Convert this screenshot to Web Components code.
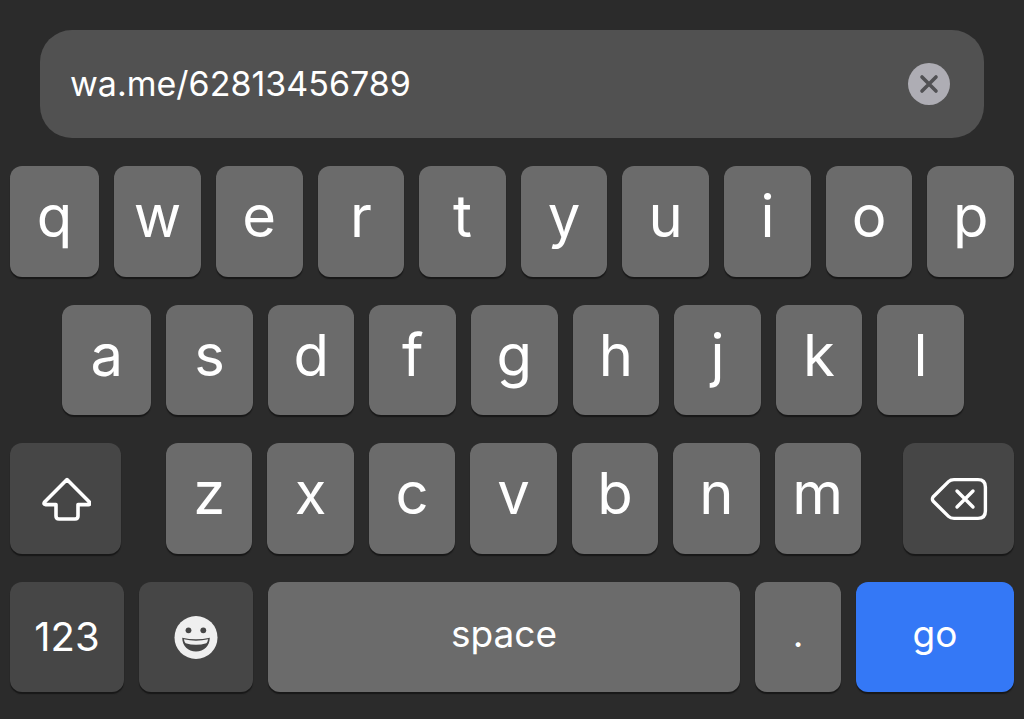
<!DOCTYPE html>
<html lang="en">
<head>
<meta charset="utf-8">
<meta name="viewport" content="width=device-width, initial-scale=1">
<title>Keyboard</title>
<style>
  html, body { margin: 0; }
  body { background: #2b2b2b; color: #fff; font-family: Inter, "Liberation Sans", sans-serif; }
</style>
</head>
<body>
<url-entry></url-entry>

<script>
const define = (name, html, setup) => {
  const template = document.createElement('template');
  template.innerHTML = html;
  customElements.define(name, class extends HTMLElement {
    constructor() {
      super();
      this.attachShadow({ mode: 'open' }).append(template.content.cloneNode(true));
    }
    connectedCallback() { if (setup) setup(this, this.shadowRoot); }
  });
};

/* One key. kind: letter (default), dark, word, go; label names icon keys. */
define('key-cap', `
  <style>
    :host { display: flex; min-width: 0; flex: 1 1 0; }
    button {
      flex: 1; min-width: 0; margin: 0; border: 0; padding: 0 0 10px;
      display: flex; align-items: center; justify-content: center;
      border-radius: 12px; background: #6b6b6b; color: #fff;
      box-shadow: 0 2px 1px #181818;
      font: 380 58px/64px Inter, "Liberation Sans", sans-serif;
    }
    :host([kind="word"]) button { font-weight: 400; font-size: 37px; padding-bottom: 6px; }
    :host([kind="dark"]) button { font-weight: 400; font-size: 40px; background: #464646; padding-bottom: 0; }
    :host([kind="dark"][label]) button { padding-top: 2px; }
    :host([kind="go"]) button { font-weight: 400; font-size: 37px; background: #3478f6; padding-bottom: 6px; }
    ::slotted(svg) { display: block; }
  </style>
  <button type="button"><slot></slot></button>`,
  (host, root) => {
    if (host.hasAttribute('label')) root.querySelector('button').setAttribute('aria-label', host.getAttribute('label'));
  });

/* A run of letter keys, built from the "keys" attribute. */
define('letter-row', `
  <style>
    :host { display: flex; gap: 15px; min-width: 0; }
    :host([edge]) key-cap:first-of-type { flex-grow: 1.03; }
  </style>`,
  (host, root) => {
    for (const ch of host.getAttribute('keys')) {
      const key = document.createElement('key-cap');
      key.textContent = ch;
      root.append(key);
    }
  });

define('address-field', `
  <style>
    :host {
      display: flex; align-items: center; box-sizing: border-box; height: 108px;
      padding: 0 34px 0 30px; border-radius: 32px; background: #515151;
    }
    input {
      flex: 1; min-width: 0; border: 0; padding: 0; background: none; color: #fff; outline: 0;
      font: 400 34px/44px Inter, "Liberation Sans", sans-serif;
    }
    button { border: 0; padding: 0; background: none; display: flex; }
  </style>
  <input type="text" aria-label="Address" value="wa.me/62813456789">
  <button type="button" aria-label="Clear text">
    <svg width="42" height="42" viewBox="0 0 42 42" fill="none">
      <circle cx="21" cy="21" r="21" fill="#aeadb4"/>
      <path d="M14 14l14 14M28 14L14 28" stroke="#515154" stroke-width="3.6" stroke-linecap="round"/>
    </svg>
  </button>`);

define('screen-keyboard', `
  <style>
    :host { display: grid; grid-template-rows: repeat(4, minmax(64px, 1fr)); gap: 28px; padding: 0 10px; }
    .home { padding: 0 5% 0 5.2%; }
    .lower { display: grid; grid-template-columns: 111fr 782fr 111fr; }
    .lower letter-row { margin: 0 42px 0 45px; }
    .bottom { display: grid; grid-template-columns: 114fr 114fr 472fr 86fr 158fr; gap: 15px; }
  </style>
  <letter-row edge keys="qwertyuiop"></letter-row>
  <letter-row edge class="home" keys="asdfghjkl"></letter-row>
  <div class="lower">
    <key-cap kind="dark" label="Shift">
      <svg width="50" height="44" viewBox="0 0 50 44" fill="none" stroke="#fff" stroke-width="3.6" stroke-linejoin="round">
        <path d="M26 2.600L3.600 25Q2 27.600 4.600 27.600H15V39Q15 42 18 42H34Q37 42 37 39V27.600H47.400Q50 27.600 48.400 25Z"/>
      </svg>
    </key-cap>
    <letter-row keys="zxcvbnm"></letter-row>
    <key-cap kind="dark" label="Delete">
      <svg width="58" height="44" viewBox="0 0 58 44" fill="none" stroke="#fff" stroke-width="3.4" stroke-linejoin="round" stroke-linecap="round">
        <path d="M24 2.600H48Q55.400 2.600 55.400 10V34Q55.400 41.400 48 41.400H24Q20.500 41.400 18.500 39.400L3 24Q1.800 22 3 20L18.500 4.600Q20.500 2.600 24 2.600Z"/>
        <path d="M27 14l16 16M43 14L27 30"/>
      </svg>
    </key-cap>
  </div>
  <div class="bottom">
    <key-cap kind="dark">123</key-cap>
    <key-cap kind="dark" label="Emoji">
      <svg width="44" height="44" viewBox="0 0 44 44">
        <circle cx="22" cy="21.500" r="21.500" fill="#efefef"/>
        <circle cx="14.500" cy="14.300" r="2.900" fill="#464646"/>
        <circle cx="29.300" cy="14.300" r="2.900" fill="#464646"/>
        <path d="M8.200 21.700Q22 24.900 35.800 21.700C35.600 30 30 35.500 22 35.500S8.400 30 8.200 21.700Z" fill="#464646"/>
        <path d="M9.800 23.300Q22 26.100 34.200 23.300Q33.600 25.900 32.400 27.300Q22 30.300 11.600 27.300Q10.400 25.900 9.800 23.300Z" fill="#efefef"/>
      </svg>
    </key-cap>
    <key-cap kind="word">space</key-cap>
    <key-cap kind="word">.</key-cap>
    <key-cap kind="go">go</key-cap>
  </div>`);

define('url-entry', `
  <style>
    :host {
      display: flex; flex-direction: column; gap: 28px; box-sizing: border-box;
      min-height: 100vh; padding: 30px 0 27px;
    }
    address-field { margin: 0 40px; }
    screen-keyboard { flex: 1; }
  </style>
  <address-field></address-field>
  <screen-keyboard></screen-keyboard>`);
</script>
</body>
</html>
